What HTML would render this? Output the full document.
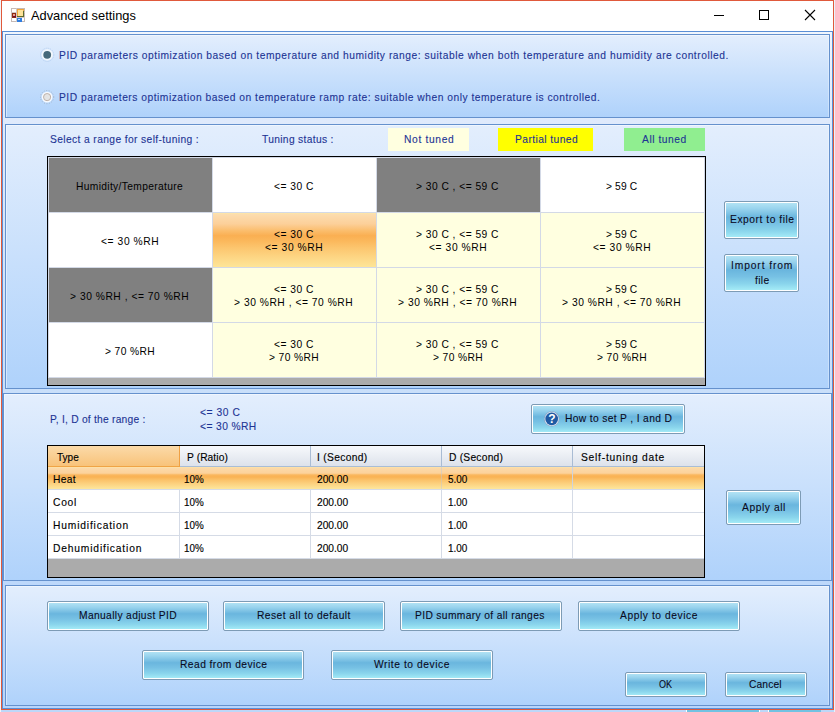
<!DOCTYPE html>
<html><head><meta charset="utf-8">
<style>
html,body{margin:0;padding:0}
body{width:835px;height:712px;position:relative;overflow:hidden;background:#bdd7f8;font-family:"Liberation Sans",sans-serif}
.a{position:absolute;box-sizing:border-box}
.t{position:absolute;line-height:0;white-space:pre;transform-origin:0 0;font-family:"Liberation Sans",sans-serif}
.s{-webkit-text-stroke:0.12px currentColor}
.s2{-webkit-text-stroke:0.1px currentColor}
.s3{-webkit-text-stroke:0.15px currentColor}
.win{left:1px;top:0;width:833px;height:710px;border:1px solid #e0593b;background:#fff}
.client{left:2px;top:31px;width:831px;height:678px;border:1px solid #5b8fd6;
 background:linear-gradient(to bottom,#f0f6fe 0%,#dfeafc 13%,#c9dffa 53%,#bdd8fb 81%,#b8d5fa 100%)}
.pnl{border:1px solid #6591cd;background:linear-gradient(to bottom,#e3eefd 0%,#afd2fb 100%);box-shadow:inset 1px 1px 0 rgba(255,255,255,.45),inset -1px 0 0 rgba(255,255,255,.3)}
.btn{border:1px solid #7d9bb5;border-radius:2px;box-shadow:inset 0 0 0 1px #fff;
 background:linear-gradient(to bottom,#b6e5f5 0%,#9ad4ee 18%,#6ab6de 42%,#77c1e4 60%,#8ad5ec 80%,#a8eef8 100%)}
</style></head><body>
<div class="a" style="left:0;top:0;width:1px;height:712px;background:#f2f5f9"></div>
<div class="a" style="left:834px;top:0;width:1px;height:712px;background:#e6f6fc"></div>
<div class="a" style="left:686px;top:710px;width:1px;height:2px;background:#fff"></div>
<div class="a" style="left:687px;top:710px;width:72px;height:2px;background:#72c2e2"></div>
<div class="a" style="left:759px;top:710px;width:1px;height:2px;background:#fff"></div>
<div class="a" style="left:768px;top:710px;width:1px;height:2px;background:#fff"></div>
<div class="a" style="left:769px;top:710px;width:52px;height:2px;background:#72c2e2"></div>
<div class="a win"></div>
<!-- title icon -->
<svg class="a" style="left:11px;top:8px" width="14" height="14" viewBox="0 0 14 14">
 <rect x="0.5" y="0.5" width="13" height="13" fill="#fff" stroke="#c6bab6"/>
 <line x1="5.5" y1="0" x2="5.5" y2="14" stroke="#d0c8c6"/>
 <line x1="0" y1="4.5" x2="14" y2="4.5" stroke="#d0c8c6"/>
 <line x1="0" y1="9.5" x2="14" y2="9.5" stroke="#d0c8c6"/>
 <rect x="6" y="1" width="7" height="8" fill="#f1a53a"/>
 <rect x="7" y="2" width="5" height="6" fill="#fde39a"/>
 <rect x="12" y="3" width="1" height="6" fill="#5f6b2c"/>
 <rect x="6" y="8" width="7" height="1" fill="#5f6b2c"/>
 <rect x="1" y="5" width="4" height="5" fill="#8e2a12"/>
 <rect x="2" y="6" width="2" height="2" fill="#e8a090"/>
 <rect x="2" y="8" width="3" height="1" fill="#6a0a3a"/>
 <rect x="6" y="10" width="5" height="4" fill="#2f7de0"/>
 <rect x="7" y="11" width="2" height="1" fill="#bde0ff"/>
</svg>
<!-- window buttons -->
<svg class="a" style="left:700px;top:0" width="133" height="30" viewBox="0 0 133 30">
 <line x1="14" y1="15.5" x2="24" y2="15.5" stroke="#000" stroke-width="1"/>
 <rect x="59.5" y="10.5" width="9" height="9" fill="none" stroke="#000" stroke-width="1"/>
 <path d="M105 10 L115 20 M115 10 L105 20" stroke="#000" stroke-width="1.1"/>
</svg>
<div class="a client"></div>
<div class="a pnl" style="left:5px;top:34px;width:825px;height:84px"></div>
<div class="a pnl" style="left:5px;top:124px;width:825px;height:265px"></div>
<div class="a pnl" style="left:3px;top:393px;width:829px;height:188px"></div>
<div class="a pnl" style="left:5px;top:585px;width:825px;height:121px"></div>
<!-- radios -->
<svg class="a" style="left:38px;top:46px" width="18" height="18" viewBox="0 0 18 18">
 <circle cx="9.2" cy="8.8" r="6.6" fill="none" stroke="#a9c6ec" stroke-width="0.8" stroke-dasharray="1 1"/>
 <circle cx="9.2" cy="8.8" r="5.6" fill="#f4f8fc"/>
 <circle cx="9.2" cy="8.8" r="3.9" fill="#476a7a"/>
</svg>
<svg class="a" style="left:38px;top:88px" width="18" height="18" viewBox="0 0 18 18">
 <circle cx="9.1" cy="9.1" r="6.6" fill="none" stroke="#9aa6b6" stroke-width="0.7" stroke-dasharray="1 1.5"/>
 <circle cx="9.1" cy="9.1" r="5.4" fill="#f8fbff"/>
 <circle cx="9.1" cy="9.1" r="3.6" fill="#e4e4e4" stroke="#b9aaa2" stroke-width="0.9"/>
</svg>
<!-- status boxes -->
<div class="a" style="left:388px;top:128px;width:81px;height:23px;background:#ffffe0"></div>
<div class="a" style="left:498px;top:128px;width:95px;height:23px;background:#ffff00"></div>
<div class="a" style="left:624px;top:128px;width:81px;height:23px;background:#90ee90"></div>
<!-- grid -->
<div class="a" style="left:47px;top:156px;width:659px;height:230px;border:1px solid #000;background:#d3d9e6"></div>
<div class="a" style="left:48px;top:378px;width:657px;height:7px;background:#ababab"></div>
<div class="a" style="left:49px;top:158px;width:163px;height:54px;background:#808080"></div>
<div class="a" style="left:213px;top:158px;width:163px;height:54px;background:#fff"></div>
<div class="a" style="left:377px;top:158px;width:163px;height:54px;background:#808080"></div>
<div class="a" style="left:541px;top:158px;width:163px;height:54px;background:#fff"></div>
<div class="a" style="left:49px;top:213px;width:163px;height:54px;background:#fff"></div>
<div class="a" style="left:213px;top:213px;width:163px;height:54px;background:linear-gradient(to bottom,#fde7a6 0%,#fcdcae 3%,#fcd09a 20%,#fbbd6c 33%,#faaf52 42%,#fbb85c 52%,#fcc66f 65%,#fdd684 82%,#fde598 100%)"></div>
<div class="a" style="left:377px;top:213px;width:163px;height:54px;background:#ffffe0"></div>
<div class="a" style="left:541px;top:213px;width:163px;height:54px;background:#ffffe0"></div>
<div class="a" style="left:49px;top:268px;width:163px;height:54px;background:#808080"></div>
<div class="a" style="left:213px;top:268px;width:163px;height:54px;background:#ffffe0"></div>
<div class="a" style="left:377px;top:268px;width:163px;height:54px;background:#ffffe0"></div>
<div class="a" style="left:541px;top:268px;width:163px;height:54px;background:#ffffe0"></div>
<div class="a" style="left:49px;top:323px;width:163px;height:54px;background:#fff"></div>
<div class="a" style="left:213px;top:323px;width:163px;height:54px;background:#ffffe0"></div>
<div class="a" style="left:377px;top:323px;width:163px;height:54px;background:#ffffe0"></div>
<div class="a" style="left:541px;top:323px;width:163px;height:54px;background:#ffffe0"></div>
<!-- table -->
<div class="a" style="left:47px;top:445px;width:658px;height:133px;border:1px solid #000;background:#fff"></div>
<div class="a" style="left:48px;top:446px;width:656px;height:21px;background:linear-gradient(to bottom,#f7f9fc,#dde2eb);border-bottom:1px solid #a9bdd6"></div>
<div class="a" style="left:48px;top:446px;width:132px;height:21px;background:linear-gradient(to bottom,#fbdaa9,#f8c37a);border-right:1px solid #efa043;border-bottom:1px solid #f0a445"></div>
<div class="a" style="left:310px;top:446px;width:1px;height:20px;background:#a9bcd4"></div>
<div class="a" style="left:441px;top:446px;width:1px;height:20px;background:#a9bcd4"></div>
<div class="a" style="left:572px;top:446px;width:1px;height:20px;background:#a9bcd4"></div>
<div class="a" style="left:48px;top:467px;width:656px;height:22px;background:linear-gradient(to bottom,#fde4a8 0%,#fcd9a8 6%,#fcd29c 28%,#fab75e 36%,#f9b254 45%,#fbc36b 60%,#fcd584 80%,#fde69c 100%)"></div>
<div class="a" style="left:441px;top:467px;width:1px;height:22px;background:rgba(190,200,215,.45)"></div>
<div class="a" style="left:572px;top:467px;width:1px;height:22px;background:#cdd3de"></div>
<div class="a" style="left:48px;top:489px;width:656px;height:1px;background:#d5dbe6"></div>
<div class="a" style="left:48px;top:512px;width:656px;height:1px;background:#d5dbe6"></div>
<div class="a" style="left:48px;top:535px;width:656px;height:1px;background:#d5dbe6"></div>
<div class="a" style="left:48px;top:558px;width:656px;height:1px;background:#d5dbe6"></div>
<div class="a" style="left:179px;top:490px;width:1px;height:69px;background:#d5dbe6"></div>
<div class="a" style="left:310px;top:490px;width:1px;height:69px;background:#d5dbe6"></div>
<div class="a" style="left:441px;top:490px;width:1px;height:69px;background:#d5dbe6"></div>
<div class="a" style="left:572px;top:490px;width:1px;height:69px;background:#d5dbe6"></div>
<div class="a" style="left:48px;top:559px;width:656px;height:18px;background:#ababab"></div>
<!-- buttons -->
<div class="a btn" style="left:724px;top:201px;width:75px;height:38px"></div>
<div class="a btn" style="left:724px;top:254px;width:75px;height:38px"></div>
<div class="a btn" style="left:531px;top:404px;width:154px;height:30px"></div>
<div class="a btn" style="left:726px;top:490px;width:75px;height:35px"></div>
<div class="a btn" style="left:47px;top:601px;width:162px;height:30px"></div>
<div class="a btn" style="left:223px;top:601px;width:162px;height:30px"></div>
<div class="a btn" style="left:400px;top:601px;width:162px;height:30px"></div>
<div class="a btn" style="left:578px;top:601px;width:162px;height:30px"></div>
<div class="a btn" style="left:142px;top:650px;width:162px;height:30px"></div>
<div class="a btn" style="left:331px;top:650px;width:162px;height:30px"></div>
<div class="a btn" style="left:625px;top:672px;width:82px;height:25px"></div>
<div class="a btn" style="left:725px;top:672px;width:82px;height:25px"></div>
<!-- help icon -->
<svg class="a" style="left:543px;top:410px" width="18" height="18" viewBox="0 0 18 18">
 <circle cx="8.7" cy="8.9" r="7.7" fill="#8aa6c8"/>
 <circle cx="8.7" cy="8.9" r="7.1" fill="#dbe5f1"/>
 <circle cx="8.7" cy="8.9" r="6.3" fill="#1f5aa4"/>
 <text x="8.8" y="13.2" text-anchor="middle" font-family="Liberation Sans" font-weight="bold" font-size="12" fill="#fff">?</text>
</svg>
<div class="t" style="left:31.20px;top:16.00px;font-size:13px;letter-spacing:0.000px;color:#000;transform:scaleX(0.9866)">Advanced settings</div>
<div class="t s" style="left:58.70px;top:55.00px;font-size:11.4px;letter-spacing:0.602px;color:#1d3494;transform:scaleX(0.9000)">PID parameters optimization based on temperature and humidity range: suitable when both temperature and humidity are controlled.</div>
<div class="t s" style="left:58.50px;top:97.00px;font-size:11.4px;letter-spacing:0.567px;color:#1d3494;transform:scaleX(0.9000)">PID parameters optimization based on temperature ramp rate: suitable when only temperature is controlled.</div>
<div class="t s" style="left:49.60px;top:139.00px;font-size:11.4px;letter-spacing:0.426px;color:#1d3494;transform:scaleX(0.9000)">Select a range for self-tuning :</div>
<div class="t s" style="left:261.50px;top:139.00px;font-size:11.4px;letter-spacing:0.364px;color:#1d3494;transform:scaleX(0.9000)">Tuning status :</div>
<div class="t s" style="left:403.80px;top:139.00px;font-size:11.4px;letter-spacing:0.743px;color:#1d3494;transform:scaleX(0.9000)">Not tuned</div>
<div class="t s" style="left:514.70px;top:139.00px;font-size:11.4px;letter-spacing:0.467px;color:#1d3494;transform:scaleX(0.9000)">Partial tuned</div>
<div class="t s" style="left:642.00px;top:139.00px;font-size:11.4px;letter-spacing:0.612px;color:#1d3494;transform:scaleX(0.9000)">All tuned</div>
<div class="t" style="left:76.30px;top:186.00px;font-size:11.4px;letter-spacing:0.376px;color:#000;transform:scaleX(0.9000)">Humidity/Temperature</div>
<div class="t" style="left:273.90px;top:186.00px;font-size:11.4px;letter-spacing:0.542px;color:#000;transform:scaleX(0.9000)">&lt;= 30 C</div>
<div class="t" style="left:416.35px;top:186.00px;font-size:11.4px;letter-spacing:0.518px;color:#000;transform:scaleX(0.9000)">&gt; 30 C , &lt;= 59 C</div>
<div class="t" style="left:606.00px;top:186.00px;font-size:11.4px;letter-spacing:0.159px;color:#000;transform:scaleX(0.9000)">&gt; 59 C</div>
<div class="t" style="left:100.75px;top:241.00px;font-size:11.4px;letter-spacing:0.654px;color:#000;transform:scaleX(0.9000)">&lt;= 30 %RH</div>
<div class="t" style="left:273.90px;top:234.00px;font-size:11.4px;letter-spacing:0.542px;color:#000;transform:scaleX(0.9000)">&lt;= 30 C</div>
<div class="t" style="left:264.75px;top:247.00px;font-size:11.4px;letter-spacing:0.654px;color:#000;transform:scaleX(0.9000)">&lt;= 30 %RH</div>
<div class="t" style="left:416.35px;top:234.00px;font-size:11.4px;letter-spacing:0.518px;color:#000;transform:scaleX(0.9000)">&gt; 30 C , &lt;= 59 C</div>
<div class="t" style="left:428.75px;top:247.00px;font-size:11.4px;letter-spacing:0.654px;color:#000;transform:scaleX(0.9000)">&lt;= 30 %RH</div>
<div class="t" style="left:606.00px;top:234.00px;font-size:11.4px;letter-spacing:0.159px;color:#000;transform:scaleX(0.9000)">&gt; 59 C</div>
<div class="t" style="left:592.75px;top:247.00px;font-size:11.4px;letter-spacing:0.654px;color:#000;transform:scaleX(0.9000)">&lt;= 30 %RH</div>
<div class="t" style="left:70.25px;top:296.00px;font-size:11.4px;letter-spacing:0.594px;color:#000;transform:scaleX(0.9000)">&gt; 30 %RH , &lt;= 70 %RH</div>
<div class="t" style="left:273.90px;top:289.00px;font-size:11.4px;letter-spacing:0.542px;color:#000;transform:scaleX(0.9000)">&lt;= 30 C</div>
<div class="t" style="left:234.25px;top:302.00px;font-size:11.4px;letter-spacing:0.594px;color:#000;transform:scaleX(0.9000)">&gt; 30 %RH , &lt;= 70 %RH</div>
<div class="t" style="left:416.35px;top:289.00px;font-size:11.4px;letter-spacing:0.518px;color:#000;transform:scaleX(0.9000)">&gt; 30 C , &lt;= 59 C</div>
<div class="t" style="left:398.25px;top:302.00px;font-size:11.4px;letter-spacing:0.594px;color:#000;transform:scaleX(0.9000)">&gt; 30 %RH , &lt;= 70 %RH</div>
<div class="t" style="left:606.00px;top:289.00px;font-size:11.4px;letter-spacing:0.159px;color:#000;transform:scaleX(0.9000)">&gt; 59 C</div>
<div class="t" style="left:562.25px;top:302.00px;font-size:11.4px;letter-spacing:0.594px;color:#000;transform:scaleX(0.9000)">&gt; 30 %RH , &lt;= 70 %RH</div>
<div class="t" style="left:104.80px;top:351.00px;font-size:11.4px;letter-spacing:0.412px;color:#000;transform:scaleX(0.9000)">&gt; 70 %RH</div>
<div class="t" style="left:273.90px;top:344.00px;font-size:11.4px;letter-spacing:0.542px;color:#000;transform:scaleX(0.9000)">&lt;= 30 C</div>
<div class="t" style="left:268.80px;top:357.00px;font-size:11.4px;letter-spacing:0.412px;color:#000;transform:scaleX(0.9000)">&gt; 70 %RH</div>
<div class="t" style="left:416.35px;top:344.00px;font-size:11.4px;letter-spacing:0.518px;color:#000;transform:scaleX(0.9000)">&gt; 30 C , &lt;= 59 C</div>
<div class="t" style="left:432.80px;top:357.00px;font-size:11.4px;letter-spacing:0.412px;color:#000;transform:scaleX(0.9000)">&gt; 70 %RH</div>
<div class="t" style="left:606.00px;top:344.00px;font-size:11.4px;letter-spacing:0.159px;color:#000;transform:scaleX(0.9000)">&gt; 59 C</div>
<div class="t" style="left:596.80px;top:357.00px;font-size:11.4px;letter-spacing:0.412px;color:#000;transform:scaleX(0.9000)">&gt; 70 %RH</div>
<div class="t s2" style="left:729.70px;top:219.00px;font-size:11.4px;letter-spacing:0.600px;color:#0a0a1e;transform:scaleX(0.9000)">Export to file</div>
<div class="t s2" style="left:730.80px;top:265.00px;font-size:11.4px;letter-spacing:0.993px;color:#0a0a1e;transform:scaleX(0.9000)">Import from</div>
<div class="t s2" style="left:754.60px;top:280.00px;font-size:11.4px;letter-spacing:0.406px;color:#0a0a1e;transform:scaleX(0.9000)">file</div>
<div class="t s2" style="left:565.40px;top:418.00px;font-size:11.4px;letter-spacing:0.386px;color:#0a0a1e;transform:scaleX(0.9000)">How to set P , I and D</div>
<div class="t s2" style="left:742.40px;top:507.00px;font-size:11.4px;letter-spacing:0.643px;color:#0a0a1e;transform:scaleX(0.9000)">Apply all</div>
<div class="t s2" style="left:78.90px;top:615.00px;font-size:11.4px;letter-spacing:0.397px;color:#0a0a1e;transform:scaleX(0.9000)">Manually adjust PID</div>
<div class="t s2" style="left:256.50px;top:615.00px;font-size:11.4px;letter-spacing:0.493px;color:#0a0a1e;transform:scaleX(0.9000)">Reset all to default</div>
<div class="t s2" style="left:415.40px;top:615.00px;font-size:11.4px;letter-spacing:0.396px;color:#0a0a1e;transform:scaleX(0.9000)">PID summary of all ranges</div>
<div class="t s2" style="left:620.20px;top:615.00px;font-size:11.4px;letter-spacing:0.633px;color:#0a0a1e;transform:scaleX(0.9000)">Apply to device</div>
<div class="t s2" style="left:179.50px;top:664.00px;font-size:11.4px;letter-spacing:0.493px;color:#0a0a1e;transform:scaleX(0.9000)">Read from device</div>
<div class="t s2" style="left:374.10px;top:664.00px;font-size:11.4px;letter-spacing:0.618px;color:#0a0a1e;transform:scaleX(0.9000)">Write to device</div>
<div class="t s2" style="left:658.50px;top:684.00px;font-size:11.4px;letter-spacing:0.000px;color:#0a0a1e;transform:scaleX(0.7948)">OK</div>
<div class="t s2" style="left:749.20px;top:684.00px;font-size:11.4px;letter-spacing:0.148px;color:#0a0a1e;transform:scaleX(0.9000)">Cancel</div>
<div class="t s" style="left:49.80px;top:419.00px;font-size:11.4px;letter-spacing:0.261px;color:#1d3494;transform:scaleX(0.9000)">P, I, D of the range :</div>
<div class="t s" style="left:200.20px;top:412.00px;font-size:11.4px;letter-spacing:0.616px;color:#1d3494;transform:scaleX(0.9000)">&lt;= 30 C</div>
<div class="t s" style="left:200.20px;top:426.00px;font-size:11.4px;letter-spacing:0.446px;color:#1d3494;transform:scaleX(0.9000)">&lt;= 30 %RH</div>
<div class="t s3" style="left:57.30px;top:457.00px;font-size:11.4px;letter-spacing:0.000px;color:#000;transform:scaleX(0.8806)">Type</div>
<div class="t s3" style="left:187.20px;top:457.00px;font-size:11.4px;letter-spacing:0.079px;color:#000;transform:scaleX(0.9000)">P (Ratio)</div>
<div class="t s3" style="left:317.20px;top:457.00px;font-size:11.4px;letter-spacing:0.348px;color:#000;transform:scaleX(0.9000)">I (Second)</div>
<div class="t s3" style="left:449.10px;top:457.00px;font-size:11.4px;letter-spacing:0.255px;color:#000;transform:scaleX(0.9000)">D (Second)</div>
<div class="t s3" style="left:580.50px;top:457.00px;font-size:11.4px;letter-spacing:0.851px;color:#000;transform:scaleX(0.9000)">Self-tuning date</div>
<div class="t s3" style="left:52.60px;top:479.00px;font-size:11.4px;letter-spacing:0.368px;color:#000;transform:scaleX(0.9000)">Heat</div>
<div class="t s3" style="left:184.20px;top:479.00px;font-size:11.4px;letter-spacing:0.000px;color:#000;transform:scaleX(0.8646)">10%</div>
<div class="t s3" style="left:316.80px;top:479.00px;font-size:11.4px;letter-spacing:0.000px;color:#000;transform:scaleX(0.8955)">200.00</div>
<div class="t s3" style="left:447.90px;top:479.00px;font-size:11.4px;letter-spacing:0.000px;color:#000;transform:scaleX(0.8702)">5.00</div>
<div class="t s3" style="left:52.60px;top:502.00px;font-size:11.4px;letter-spacing:0.813px;color:#000;transform:scaleX(0.9000)">Cool</div>
<div class="t s3" style="left:184.20px;top:502.00px;font-size:11.4px;letter-spacing:0.000px;color:#000;transform:scaleX(0.8646)">10%</div>
<div class="t s3" style="left:316.80px;top:502.00px;font-size:11.4px;letter-spacing:0.000px;color:#000;transform:scaleX(0.8955)">200.00</div>
<div class="t s3" style="left:447.90px;top:502.00px;font-size:11.4px;letter-spacing:0.000px;color:#000;transform:scaleX(0.8702)">1.00</div>
<div class="t s3" style="left:52.60px;top:525.00px;font-size:11.4px;letter-spacing:0.925px;color:#000;transform:scaleX(0.9000)">Humidification</div>
<div class="t s3" style="left:184.20px;top:525.00px;font-size:11.4px;letter-spacing:0.000px;color:#000;transform:scaleX(0.8646)">10%</div>
<div class="t s3" style="left:316.80px;top:525.00px;font-size:11.4px;letter-spacing:0.000px;color:#000;transform:scaleX(0.8955)">200.00</div>
<div class="t s3" style="left:447.90px;top:525.00px;font-size:11.4px;letter-spacing:0.000px;color:#000;transform:scaleX(0.8702)">1.00</div>
<div class="t s3" style="left:52.60px;top:548.00px;font-size:11.4px;letter-spacing:0.935px;color:#000;transform:scaleX(0.9000)">Dehumidification</div>
<div class="t s3" style="left:184.20px;top:548.00px;font-size:11.4px;letter-spacing:0.000px;color:#000;transform:scaleX(0.8646)">10%</div>
<div class="t s3" style="left:316.80px;top:548.00px;font-size:11.4px;letter-spacing:0.000px;color:#000;transform:scaleX(0.8955)">200.00</div>
<div class="t s3" style="left:447.90px;top:548.00px;font-size:11.4px;letter-spacing:0.000px;color:#000;transform:scaleX(0.8702)">1.00</div>
</body></html>
